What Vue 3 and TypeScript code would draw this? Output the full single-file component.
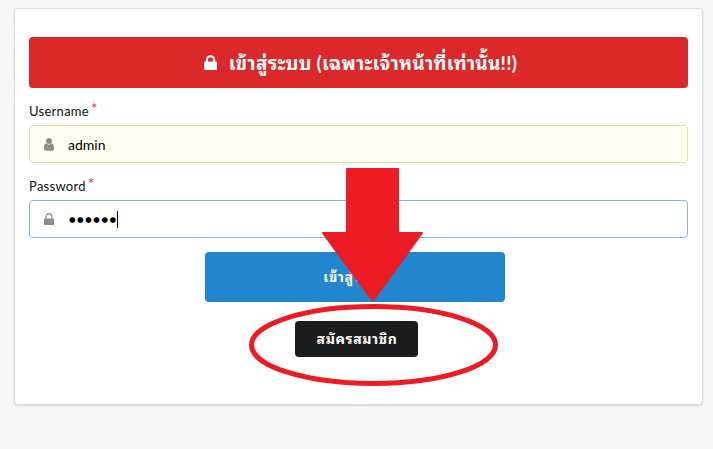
<script setup lang="ts">
import { ref } from 'vue'

const username = ref<string>('admin')
const maskedPassword = ref<string>('●●●●●●')
</script>

<template>
  <main class="page">
    <form class="card" @submit.prevent>
      <header class="banner">
        <svg class="banner-lock" viewBox="0 0 13 15" aria-hidden="true">
          <path d="M2.900 8V4.900a3.600 3.700 0 0 1 7.200 0V8" fill="none" stroke="currentColor" stroke-width="2.100" />
          <rect y="6.500" width="13" height="8.500" rx="0.900" fill="currentColor" />
        </svg>
        <span class="banner-text">เข้าสู่ระบบ (เฉพาะเจ้าหน้าที่เท่านั้น!!)</span>
      </header>

      <div class="field">
        <label class="label">Username<span class="star">*</span></label>
        <div class="control filled">
          <svg class="icon" viewBox="0 0 10 13" aria-hidden="true">
            <circle cx="5" cy="3.100" r="3" fill="currentColor" />
            <path d="M2.200 5.200C.5 5.500 0 7.400 0 10v.8C0 12.200 .8 12.700 2 12.700h6c1.200 0 2-.5 2-1.900V10c0-2.600-.5-4.500-2.200-4.800C6.300 7.100 3.700 7.100 2.200 5.200Z" fill="currentColor" />
          </svg>
          <span class="value">{{ username }}</span>
        </div>
      </div>

      <div class="field">
        <label class="label">Password<span class="star">*</span></label>
        <div class="control">
          <svg class="icon lock" viewBox="0 0 10 12" aria-hidden="true">
            <path d="M2.100 7V4a2.900 3.300 0 0 1 5.800 0V7" fill="none" stroke="currentColor" stroke-width="1.300" />
            <rect y="5.500" width="10" height="6.500" rx="0.700" fill="currentColor" />
          </svg>
          <span class="dots">{{ maskedPassword }}</span>
          <i class="caret"></i>
        </div>
      </div>

      <button class="button login" type="submit"><span>เข้าสู่ระบบ</span></button>
      <button class="button register" type="button"><span>สมัครสมาชิก</span></button>
    </form>

    <svg class="marks" viewBox="0 0 713 449" aria-hidden="true">
      <path d="M347 169h51v64h24L373.500 300h-1.500L323 233h24Z" fill="#ed1c24" stroke="#ed1c24" stroke-width="2" stroke-linejoin="round" />
      <ellipse cx="373.500" cy="345" rx="122" ry="38.500" fill="none" stroke="#ed1c24" stroke-width="5" />
    </svg>
  </main>
</template>

<style>
body {
  background: #f7f7f7;
}
</style>

<style scoped>
.page {
  position: relative;
  box-sizing: border-box;
  height: 449px;
  padding: 8px 10px 44px 14px;
  background: #f7f7f7;
  font-family: Lato, "Noto Sans Thai Looped", Loma, Waree, Garuda, "Noto Serif Thai", sans-serif;
  font-size: 14px;
  color: rgba(0, 0, 0, 0.87);
  overflow: hidden;
}

.card {
  box-sizing: border-box;
  display: flex;
  flex-direction: column;
  height: 397px;
  padding: 28px 14px;
  border: 1px solid #dedede;
  border-radius: 4px;
  background: #fff;
  box-shadow: 0 1px 2px rgba(34, 36, 38, 0.15);
}

.banner {
  box-sizing: border-box;
  display: flex;
  flex: none;
  align-items: center;
  justify-content: center;
  height: 51px;
  gap: 12px;
  padding-left: 4px;
  border-radius: 4px;
  background: #db2828;
  color: #fff;
}

.banner-lock {
  width: 13px;
  height: 15px;
}

.banner-text {
  font-size: 19px;
  font-weight: 700;
  letter-spacing: 0.240px;
  line-height: 24px;
  white-space: nowrap;
}

.field {
  flex: none;
  height: 75px;
}

.label {
  display: flex;
  box-sizing: border-box;
  height: 37px;
  padding-top: 13px;
  font-size: 13px;
  letter-spacing: 0.280px;
  line-height: 20px;
  color: #111;
}

.star {
  margin-left: 2px;
  margin-top: -3px;
  font-size: 15px;
  color: #db2838;
}

.control {
  display: flex;
  box-sizing: border-box;
  align-items: center;
  height: 38px;
  padding-left: 14px;
  border: 1px solid #85b7d9;
  border-radius: 4px;
}

.control.filled {
  border-color: #e5dfa1;
  background: #fffff0;
}

.icon {
  width: 10px;
  height: 13px;
  margin-right: 14px;
  color: #8e8e86;
}

.icon.lock {
  height: 12px;
  margin-bottom: 1px;
  color: #8e8e8e;
}

.value {
  padding-top: 1px;
  line-height: 18px;
  color: #000;
}

.dots {
  width: 48px;
  padding: 2px 0 0 1px;
  font-family: "DejaVu Sans", sans-serif;
  font-size: 7.500px;
  letter-spacing: 1.550px;
  line-height: 18px;
  color: #000;
  white-space: nowrap;
}

.caret {
  width: 1px;
  height: 17px;
  background: #000;
}

.button {
  align-self: center;
  flex: none;
  border: 0;
  border-radius: 4px;
  color: #fff;
  font-family: inherit;
  font-size: 14px;
  font-weight: 700;
  letter-spacing: 0.600px;
}

.login {
  width: 300px;
  height: 50px;
  margin: 14px 7px 0 0;
  padding: 0 0 4px 1px;
  background: #2185d0;
}

.register {
  width: 123px;
  height: 36px;
  margin: 19px 4px 0 0;
  padding: 0 0 4px 1px;
  background: #1b1c1d;
}

.marks {
  position: absolute;
  inset: 0;
  width: 713px;
  height: 449px;
  pointer-events: none;
}
</style>
